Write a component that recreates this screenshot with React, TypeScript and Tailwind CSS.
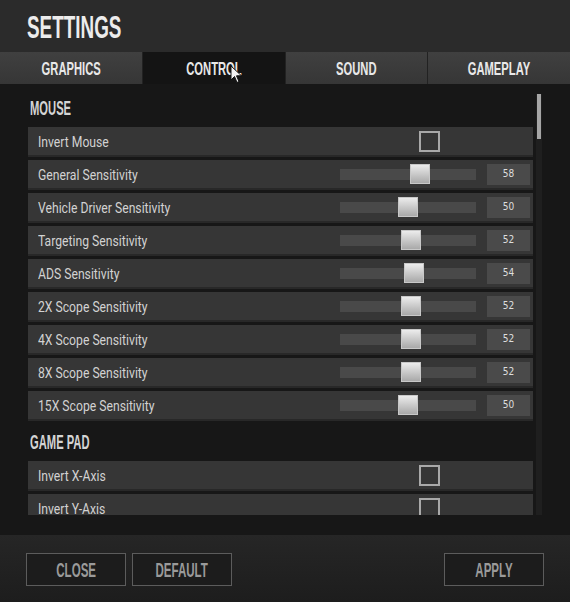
import React from 'react';

// Game-style settings panel, CONTROL tab selected

type Row =
  | { label: string; kind: 'check' }
  | { label: string; kind: 'slider'; value: number };

const mouseRows: Row[] = [
  { label: 'Invert Mouse', kind: 'check' },
  { label: 'General Sensitivity', kind: 'slider', value: 58 },
  { label: 'Vehicle Driver Sensitivity', kind: 'slider', value: 50 },
  { label: 'Targeting Sensitivity', kind: 'slider', value: 52 },
  { label: 'ADS Sensitivity', kind: 'slider', value: 54 },
  { label: '2X Scope Sensitivity', kind: 'slider', value: 52 },
  { label: '4X Scope Sensitivity', kind: 'slider', value: 52 },
  { label: '8X Scope Sensitivity', kind: 'slider', value: 52 },
  { label: '15X Scope Sensitivity', kind: 'slider', value: 50 },
];

const padRows: Row[] = [
  { label: 'Invert X-Axis', kind: 'check' },
  { label: 'Invert Y-Axis', kind: 'check' },
];

const tabs = ['GRAPHICS', 'CONTROL', 'SOUND', 'GAMEPLAY'];

const titleFont = { fontFamily: '"Liberation Sans", Arial, sans-serif' };
const labelFont = { fontFamily: 'Roboto, "Liberation Sans", sans-serif' };

function SectionTitle({ text }: { text: string }) {
  return (
    <div className="h-[35px] flex items-center pl-[2px] mb-[2px] shrink-0">
      <span
        className="inline-block origin-left scale-x-[0.56] text-[20px] leading-none font-bold text-[#d4d4d4]"
        style={titleFont}
      >
        {text}
      </span>
    </div>
  );
}

function Slider({ value }: { value: number }) {
  // thumb offset from the track's left edge
  const left = 58 + (value - 50) * 1.5;
  return (
    <div className="flex items-center">
      <div className="relative w-[136px] h-[11px] bg-[#494949]">
        <div
          className="absolute top-[-5px] w-[20px] h-[20px] border border-[#c8c8c8] bg-gradient-to-b from-[#ececec] to-[#a9a9a9]"
          style={{ left }}
        />
      </div>
      <div className="ml-[11px] w-[43px] h-[21px] bg-[#4a4a4a] flex items-center justify-center">
        <span
          className="text-[10px] leading-none text-[#dedede]"
          style={{ fontFamily: '"DejaVu Sans Condensed", "DejaVu Sans", sans-serif' }}
        >
          {value}
        </span>
      </div>
    </div>
  );
}

function SettingRow({ row }: { row: Row }) {
  return (
    <div className="h-[30px] mb-[3px] flex items-center pl-[10px] pr-[3px] bg-[#363636] border-b-2 border-[#282828] shrink-0">
      <div className="flex-1">
        <span
          className="inline-block origin-left scale-x-[0.87] text-[14px] leading-none text-[#d2d2d2]"
          style={labelFont}
        >
          {row.label}
        </span>
      </div>
      <div className="w-[190px] flex items-center">
        {row.kind === 'check' ? (
          <div className="ml-[79px] w-[21px] h-[21px] border-2 border-[#a9a9a9]" />
        ) : (
          <Slider value={row.value} />
        )}
      </div>
    </div>
  );
}

function Cursor() {
  return (
    <svg className="absolute left-[87px] top-[13px]" width="13" height="19" viewBox="0 0 13 19">
      <path d="M1 1 L1 15 L4.5 11.5 L7 17.5 L9 16.5 L6.5 10.8 L11.5 10.8 Z" fill="#f2f2f2" stroke="#111" strokeWidth="1" />
    </svg>
  );
}

function FooterButton({ text }: { text: string }) {
  return (
    <button className="w-[100px] h-[33px] border border-[#5c5c5c] bg-[#1c1c1c] flex items-center justify-center">
      <span
        className="inline-block scale-x-[0.55] text-[21px] leading-none font-bold text-[#9a9a9a]"
        style={titleFont}
      >
        {text}
      </span>
    </button>
  );
}

export default function App() {
  return (
    <div className="w-[570px] h-[602px] bg-[#171717] flex flex-col overflow-hidden">
      {/* Header */}
      <div className="h-[52px] bg-[#2b2b2b] flex items-center pl-[27px] shrink-0">
        <span
          className="inline-block origin-left scale-x-[0.59] text-[32px] leading-none font-bold text-[#ececec] mt-[2px]"
          style={titleFont}
        >
          SETTINGS
        </span>
      </div>

      {/* Tabs */}
      <div className="h-[32px] grid grid-cols-4 gap-px bg-[#222] shrink-0">
        {tabs.map((t) => {
          const active = t === 'CONTROL';
          return (
            <div
              key={t}
              className={
                active
                  ? 'relative bg-[#141414] flex items-center justify-center'
                  : 'relative bg-gradient-to-b from-[#404040] to-[#363636] flex items-center justify-center'
              }
            >
              <span
                className="inline-block scale-x-[0.59] text-[19px] leading-none font-bold text-[#e8e8e8]"
                style={titleFont}
              >
                {t}
              </span>
              {active && <Cursor />}
            </div>
          );
        })}
      </div>

      {/* Content */}
      <div className="h-[430px] mt-px flex shrink-0">
        <div className="w-[535px] pl-[28px] pr-[2px] pt-[5px] flex flex-col overflow-hidden">
          <SectionTitle text="MOUSE" />
          {mouseRows.map((r) => (
            <SettingRow key={r.label} row={r} />
          ))}
          <SectionTitle text="GAME PAD" />
          {padRows.map((r) => (
            <SettingRow key={r.label} row={r} />
          ))}
        </div>
        <div className="ml-[1px] w-[6px] pt-[9px] flex flex-col">
          <div className="flex-1 bg-[#1f1f1f] flex flex-col">
            <div className="ml-[1px] w-[4px] h-[45px] bg-[#a6a6a6]" />
          </div>
        </div>
      </div>

      <div className="h-[20px] shrink-0" />

      {/* Footer */}
      <div className="flex-1 bg-gradient-to-b from-[#262626] to-[#1d1d1d] flex items-start pt-[18px] px-[26px]">
        <div className="flex gap-[6px]">
          <FooterButton text="CLOSE" />
          <FooterButton text="DEFAULT" />
        </div>
        <div className="flex-1" />
        <FooterButton text="APPLY" />
      </div>
    </div>
  );
}
